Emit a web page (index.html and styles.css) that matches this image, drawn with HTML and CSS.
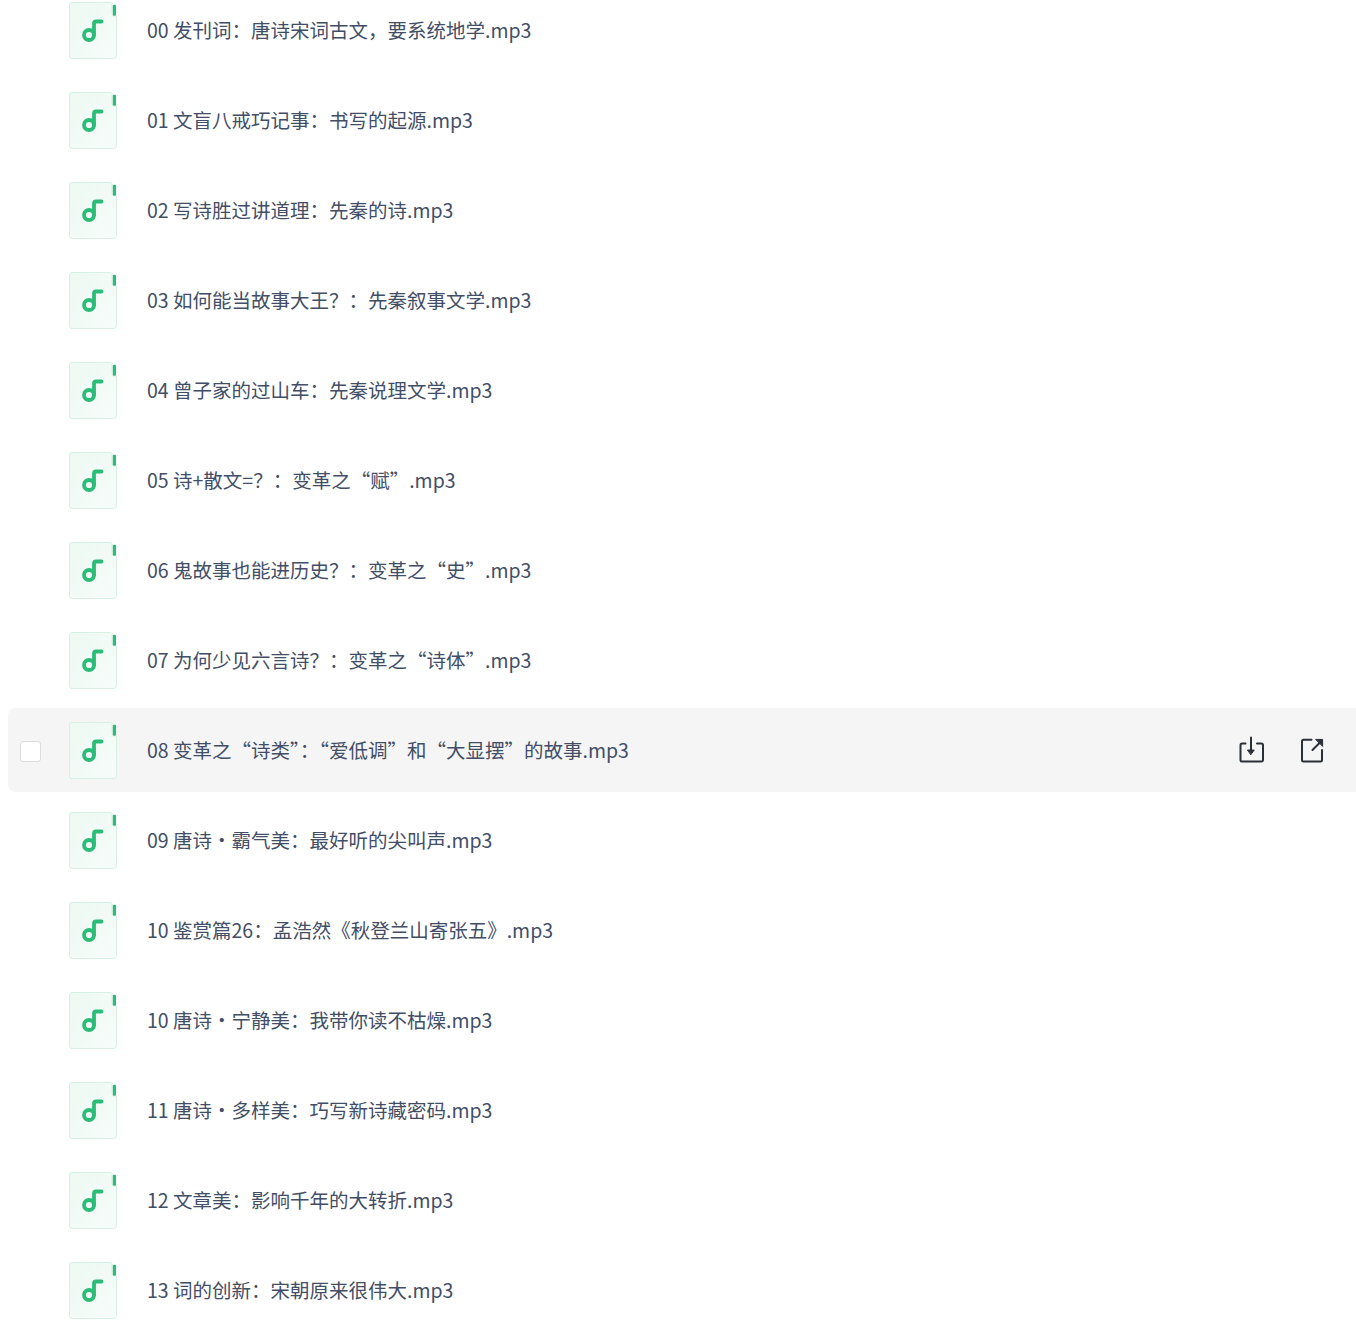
FILE: index.html
```html
<!DOCTYPE html>
<html lang="zh-CN">
<head>
  <meta charset="UTF-8" />
  <title>文件列表</title>
  <link rel="stylesheet" href="styles.css">
</head>
<body>
  <svg class="defs" width="0" height="0" aria-hidden="true">
    <defs>
      <linearGradient id="paper" x1="0" y1="0" x2="1" y2="1">
        <stop offset="0" stop-color="#edf9f3"/>
        <stop offset="1" stop-color="#f7fcfa"/>
      </linearGradient>
    </defs>
    <symbol id="audio" viewBox="0 0 48 57">
      <path d="M3 .5h38.500c1.200 0 1.500.8 1.500 2v9c0 1.500 1 2.500 2.500 2.500h2v39.500a3 3 0 0 1-3 3H3a2.500 2.500 0 0 1-2.500-2.500V3A2.500 2.500 0 0 1 3 .5z" fill="url(#paper)" stroke="#d6f0e4"/>
      <rect x="43.800" y="2.800" width="3.200" height="11" rx="1" fill="#2bbd78"/>
      <path d="M25 33V21.500q0-2 2-2h5.500" fill="none" stroke="#2bbd78" stroke-width="3.800" stroke-linecap="round"/>
      <circle cx="20" cy="33" r="5" fill="none" stroke="#2bbd78" stroke-width="3.800"/>
    </symbol>
  </svg>

  <ul class="list">
    <li class="row"><svg class="file-icon"><use href="#audio"/></svg><span class="name">00 发刊词：唐诗宋词古文，要系统地学.mp3</span></li>
    <li class="row"><svg class="file-icon"><use href="#audio"/></svg><span class="name">01 文盲八戒巧记事：书写的起源.mp3</span></li>
    <li class="row"><svg class="file-icon"><use href="#audio"/></svg><span class="name">02 写诗胜过讲道理：先秦的诗.mp3</span></li>
    <li class="row"><svg class="file-icon"><use href="#audio"/></svg><span class="name">03 如何能当故事大王？：先秦叙事文学.mp3</span></li>
    <li class="row"><svg class="file-icon"><use href="#audio"/></svg><span class="name">04 曾子家的过山车：先秦说理文学.mp3</span></li>
    <li class="row"><svg class="file-icon"><use href="#audio"/></svg><span class="name">05 诗+散文=？：变革之“赋”.mp3</span></li>
    <li class="row"><svg class="file-icon"><use href="#audio"/></svg><span class="name">06 鬼故事也能进历史？：变革之“史”.mp3</span></li>
    <li class="row"><svg class="file-icon"><use href="#audio"/></svg><span class="name">07 为何少见六言诗？：变革之“诗体”.mp3</span></li>
    <li class="row active">
      <span class="check"></span>
      <svg class="file-icon"><use href="#audio"/></svg>
      <span class="name">08 变革之“诗类”：“爱低调”和“大显摆”的故事.mp3</span>
      <span class="actions">
        <svg class="action" viewBox="0 0 28 28" fill="none" stroke="#2b2f36" stroke-width="2" stroke-linecap="round" stroke-linejoin="round">
          <path d="M7.500 7.500H4a1.500 1.500 0 0 0-1.500 1.500V24a1.500 1.500 0 0 0 1.500 1.500h19.500A1.500 1.500 0 0 0 25 24V9a1.500 1.500 0 0 0-1.500-1.500H19"/>
          <path d="M13 1.500V14"/>
          <path d="M9.800 14h6.400L13 18.500z" fill="#2b2f36" stroke-width="1"/>
        </svg>
        <svg class="action" viewBox="0 0 28 28" fill="none" stroke="#2b2f36" stroke-width="2" stroke-linecap="round" stroke-linejoin="round">
          <path d="M13.500 3.800H5.500A1.500 1.500 0 0 0 4 5.300V24a1.500 1.500 0 0 0 1.500 1.500h17A1.500 1.500 0 0 0 24 24V14"/>
          <path d="M14.500 14L21.500 7"/>
          <path d="M18 3.400h6.600V10z" fill="#2b2f36" stroke-width="1"/>
        </svg>
      </span>
    </li>
    <li class="row"><svg class="file-icon"><use href="#audio"/></svg><span class="name">09 唐诗・霸气美：最好听的尖叫声.mp3</span></li>
    <li class="row"><svg class="file-icon"><use href="#audio"/></svg><span class="name">10 鉴赏篇26：孟浩然《秋登兰山寄张五》.mp3</span></li>
    <li class="row"><svg class="file-icon"><use href="#audio"/></svg><span class="name">10 唐诗・宁静美：我带你读不枯燥.mp3</span></li>
    <li class="row"><svg class="file-icon"><use href="#audio"/></svg><span class="name">11 唐诗・多样美：巧写新诗藏密码.mp3</span></li>
    <li class="row"><svg class="file-icon"><use href="#audio"/></svg><span class="name">12 文章美：影响千年的大转折.mp3</span></li>
    <li class="row"><svg class="file-icon"><use href="#audio"/></svg><span class="name">13 词的创新：宋朝原来很伟大.mp3</span></li>
  </ul>
</body>
</html>
```

FILE: styles.css
```css
html, body {
  margin: 0;
  height: 1330px;
  overflow: hidden;
  background: #fff;
}

body {
  font-family: "Noto Sans CJK SC", "Noto Sans", sans-serif;
  color: #424e66;
}

.defs {
  display: block;
  height: 0;
}

.list {
  list-style: none;
  margin: -12px 0 0;
  padding: 0 0 0 8px;
}

.row {
  display: flex;
  align-items: center;
  height: 84px;
  margin-bottom: 6px;
  padding-left: 61px;
  border-radius: 8px;
  box-sizing: border-box;
}

.active {
  position: relative;
  background: #f5f5f5;
  padding-right: 30px;
  border-radius: 8px 0 0 8px;
}

.check {
  position: absolute;
  left: 12px;
  top: 33px;
  width: 19px;
  height: 19px;
  background: #fff;
  border: 1px solid #dcdcdc;
  border-radius: 3px;
}

.file-icon {
  width: 48px;
  height: 57px;
  flex-shrink: 0;
}

.name {
  margin-left: 30px;
  font-size: 19.500px;
  line-height: 28px;
  white-space: nowrap;
}

.actions {
  margin-left: auto;
  display: flex;
  gap: 32px;
}

.action {
  width: 28px;
  height: 28px;
}
```
